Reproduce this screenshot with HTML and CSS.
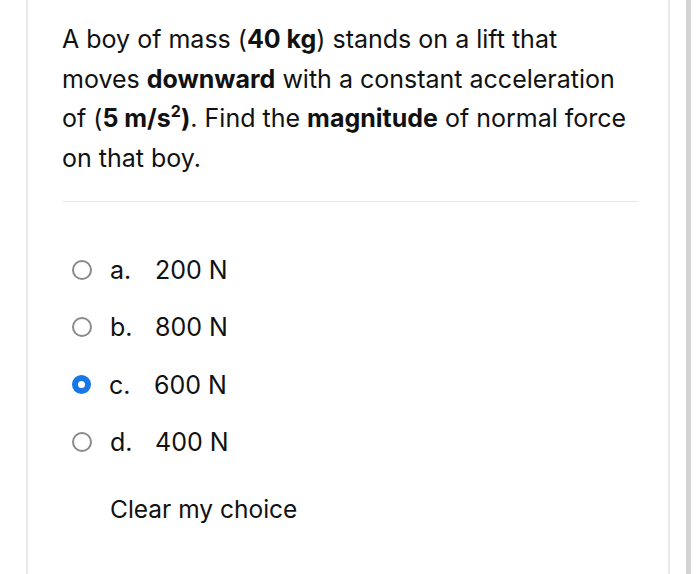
FILE: index.html
```html
<!DOCTYPE html>
<html>
<head>
<meta charset="utf-8">
<link rel="stylesheet" href="styles.css">
</head>
<body>
<div class="frame">
  <div class="card">
    <div class="question">A boy of mass (<b>40 kg</b>) stands on a lift that<br>moves <b>downward</b> with a constant acceleration<br>of (<b>5 m/s<sup>2</sup>)</b>. Find the <b>magnitude</b> of normal force<br>on that boy.</div>
    <hr class="sep">
    <div class="answers">
      <label class="opt"><span class="radio"></span><span class="letter">a.</span><span class="val">200 N</span></label>
      <label class="opt"><span class="radio"></span><span class="letter">b.</span><span class="val">800 N</span></label>
      <label class="opt"><span class="radio checked"></span><span class="letter">c.</span><span class="val">600 N</span></label>
      <label class="opt"><span class="radio"></span><span class="letter">d.</span><span class="val">400 N</span></label>
    </div>
    <div class="clear">Clear my choice</div>
  </div>
  <div class="scroll"></div>
</div>
</body>
</html>
```
FILE: styles.css
```css
html, body {
  margin: 0;
  padding: 0;
  background: #fff;
}
body {
  font-family: Inter, "Liberation Sans", Arial, sans-serif;
  color: #111;
  width: 700px;
  height: 574px;
  overflow: hidden;
}
.frame {
  display: flex;
  height: 574px;
  padding-left: 26px;
}
.card {
  width: 644px;
  border-left: 2px solid #e9e9e9;
  border-right: 2px solid #e9e9e9;
  padding: 20px 0 0 34px;
  box-sizing: border-box;
}
.scroll {
  width: 5px;
  margin-left: 16px;
  background: #d4d4d4;
}
.question {
  font-size: 25px;
  line-height: 39.5px;
  white-space: nowrap;
}
.question b {
  font-weight: 700;
}
.question sup {
  font-size: 16px;
  line-height: 0;
  vertical-align: 10px;
}
.sep {
  border: 0;
  border-top: 1px solid #e6e6e6;
  margin: 23px 0 0 0;
  width: 576px;
}
.answers {
  display: flex;
  flex-direction: column;
  padding-top: 39px;
}
.opt {
  display: flex;
  align-items: center;
  height: 57.5px;
  font-size: 25px;
}
.radio {
  width: 16px;
  height: 16px;
  border: 2px solid #8a8a8a;
  border-radius: 50%;
  margin-left: 10px;
  box-sizing: content-box;
}
.radio.checked {
  width: 7px;
  height: 7px;
  border: 6.5px solid #1877e6;
}
.letter {
  margin-left: 18px;
  width: 45px;
}
.clear {
  font-size: 24.5px;
  margin: 23px 0 0 48px;
}
```
